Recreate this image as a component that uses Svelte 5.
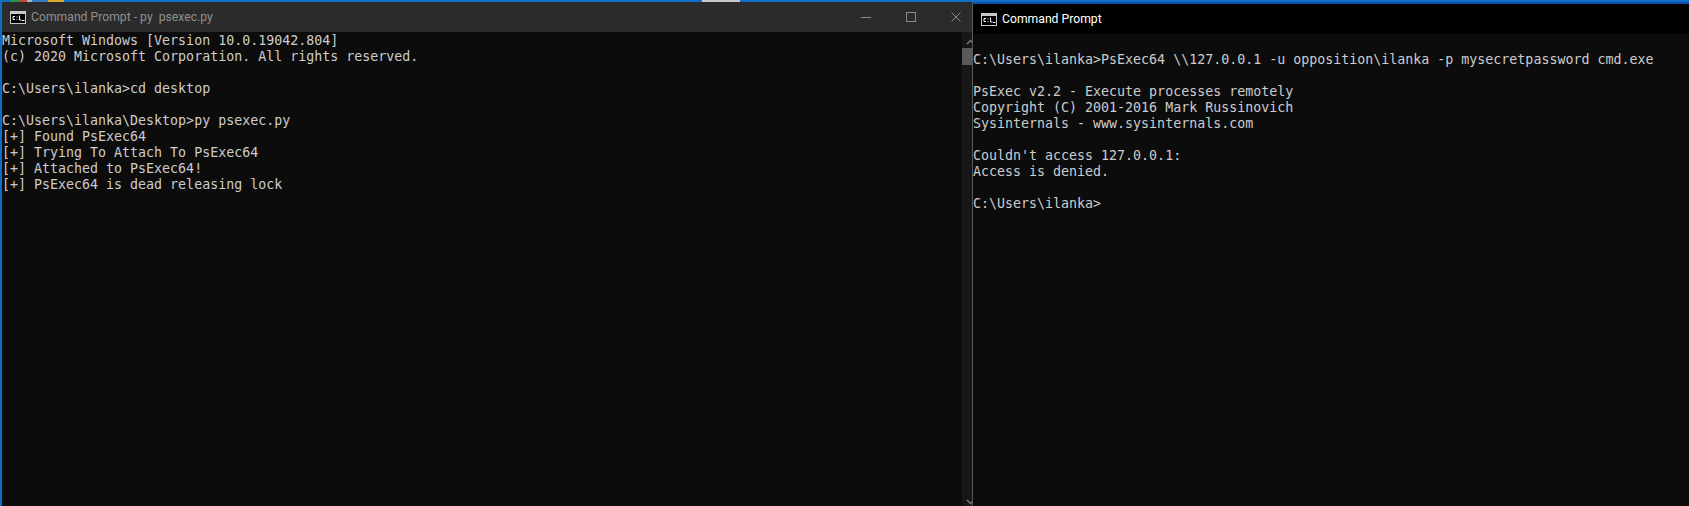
<script>
	const leftLines = [
		"Microsoft Windows [Version 10.0.19042.804]",
		"(c) 2020 Microsoft Corporation. All rights reserved.",
		"",
		"C:\\Users\\ilanka>cd desktop",
		"",
		"C:\\Users\\ilanka\\Desktop>py psexec.py",
		"[+] Found PsExec64",
		"[+] Trying To Attach To PsExec64",
		"[+] Attached to PsExec64!",
		"[+] PsExec64 is dead releasing lock"
	];

	const rightLines = [
		"C:\\Users\\ilanka>PsExec64 \\\\127.0.0.1 -u opposition\\ilanka -p mysecretpassword cmd.exe",
		"",
		"PsExec v2.2 - Execute processes remotely",
		"Copyright (C) 2001-2016 Mark Russinovich",
		"Sysinternals - www.sysinternals.com",
		"",
		"Couldn't access 127.0.0.1:",
		"Access is denied.",
		"",
		"C:\\Users\\ilanka>"
	];

	// bits of the window behind, showing over the top edge
	const patches = [
		{ color: "#0f6fc6", width: 10 },
		{ color: "#2f8f4f", width: 9 },
		{ color: "#c0483c", width: 8 },
		{ color: "#a8b8c8", width: 5 },
		{ color: "#3b78c8", width: 16 },
		{ color: "#d9a92c", width: 16 }
	];
</script>

{#snippet cmdIcon()}
	<svg class="cmd-icon" viewBox="0 0 16 13" aria-hidden="true">
		<rect x="0.5" y="0.5" width="15" height="12" fill="#000" stroke="#c8c8c8" />
		<rect x="1" y="1" width="14" height="2" fill="#c8c8c8" />
		<path d="M3 5.5h2M3 5.5v3M3 8.5h2M7 5.5v1M7 8v0.8M9.5 4.5v4.5h2M12 9.5h2.5" stroke="#fff" stroke-width="1" fill="none" />
	</svg>
{/snippet}

<div class="desktop">
	<div class="strip">
		<div class="patches">
			{#each patches as patch}
				<span style:background={patch.color} style:width="{patch.width}px"></span>
			{/each}
		</div>
		<span class="strip-gap"></span>
		<span class="strip-light"></span>
	</div>

	<div class="windows">
		<section class="window left">
			<header class="titlebar">
				{@render cmdIcon()}
				<span class="title">Command Prompt - py  psexec.py</span>
				<div class="controls">
					<svg viewBox="0 0 10 10" aria-hidden="true"><path d="M0 5.5h10" /></svg>
					<svg viewBox="0 0 10 10" aria-hidden="true"><rect x="0.5" y="0.5" width="9" height="9" /></svg>
					<svg viewBox="0 0 10 10" aria-hidden="true"><path d="M0.5 0.5l9 9M9.5 0.5l-9 9" /></svg>
				</div>
			</header>
			<div class="console-wrap">
				<pre class="console">{leftLines.join("\n")}</pre>
				<div class="scrollbar">
					<svg class="arrow" viewBox="0 0 9 6" aria-hidden="true"><path d="M1 5l3.5-3.5L8 5" /></svg>
					<span class="thumb"></span>
					<svg class="arrow down" viewBox="0 0 9 6" aria-hidden="true"><path d="M1 1l3.5 3.5L8 1" /></svg>
				</div>
			</div>
		</section>

		<section class="window right">
			<header class="titlebar">
				{@render cmdIcon()}
				<span class="title">Command Prompt</span>
			</header>
			<pre class="console">{rightLines.join("\n")}</pre>
		</section>
	</div>
</div>

<style>
	:global(body) {
		margin: 0;
		background: #0c0c0c;
	}

	.desktop {
		width: 1689px;
		height: 506px;
		overflow: hidden;
		display: flex;
		flex-direction: column;
	}

	.strip {
		height: 2px;
		flex: none;
		display: flex;
		background: #0f6fc6;
	}

	.patches {
		display: flex;
		width: 64px;
	}

	.strip-gap {
		width: 638px;
	}

	.strip-light {
		width: 38px;
		background: #c8c8c8;
	}

	.windows {
		flex: 1;
		min-height: 0;
		display: flex;
	}

	.window {
		display: flex;
		flex-direction: column;
		min-width: 0;
	}

	.left {
		width: 972px;
		flex: none;
		box-sizing: border-box;
		border-left: 2px solid #0f6fc6;
	}

	.right {
		flex: 1;
		border-left: 1px solid #5a5a5a;
		border-top: 2px solid #0f4fa8;
	}

	.titlebar {
		height: 30px;
		flex: none;
		display: flex;
		align-items: center;
		padding-left: 8px;
		gap: 5px;
		background: #2b2b2b;
		font-family: Roboto, "Noto Sans", sans-serif;
		font-size: 12.2px;
		color: #8f8f8f;
	}

	.right .titlebar {
		background: #000;
		color: #fff;
	}

	.title {
		white-space: pre;
	}

	.cmd-icon {
		width: 16px;
		height: 13px;
		flex: none;
	}

	.controls {
		margin-left: auto;
		display: flex;
		gap: 35px;
		padding-right: 11px;
	}

	.controls svg {
		width: 10px;
		height: 10px;
		fill: none;
		stroke: #8a8a8a;
		stroke-width: 1;
	}

	.console-wrap {
		flex: 1;
		min-height: 0;
		display: flex;
		background: #0c0c0c;
	}

	.console {
		flex: 1;
		margin: 0;
		padding: 1px 0 0;
		background: #0c0c0c;
		color: #cccccc;
		font-family: "DejaVu Sans Mono", "Liberation Mono", monospace;
		font-size: 13.3px;
		line-height: 16px;
		white-space: pre;
	}

	.right .console {
		padding-top: 17.5px;
	}

	.scrollbar {
		width: 10px;
		flex: none;
		overflow: hidden;
		display: flex;
		flex-direction: column;
		align-items: flex-start;
		background: #171717;
	}

	.arrow {
		width: 9px;
		height: 6px;
		flex: none;
		margin: 7px 0 3px 4px;
		fill: none;
		stroke: #777;
		stroke-width: 1.5;
	}

	.arrow.down {
		margin: auto 0 1px 4px;
	}

	.thumb {
		width: 100%;
		height: 17px;
		background: #5a5a5a;
	}
</style>
